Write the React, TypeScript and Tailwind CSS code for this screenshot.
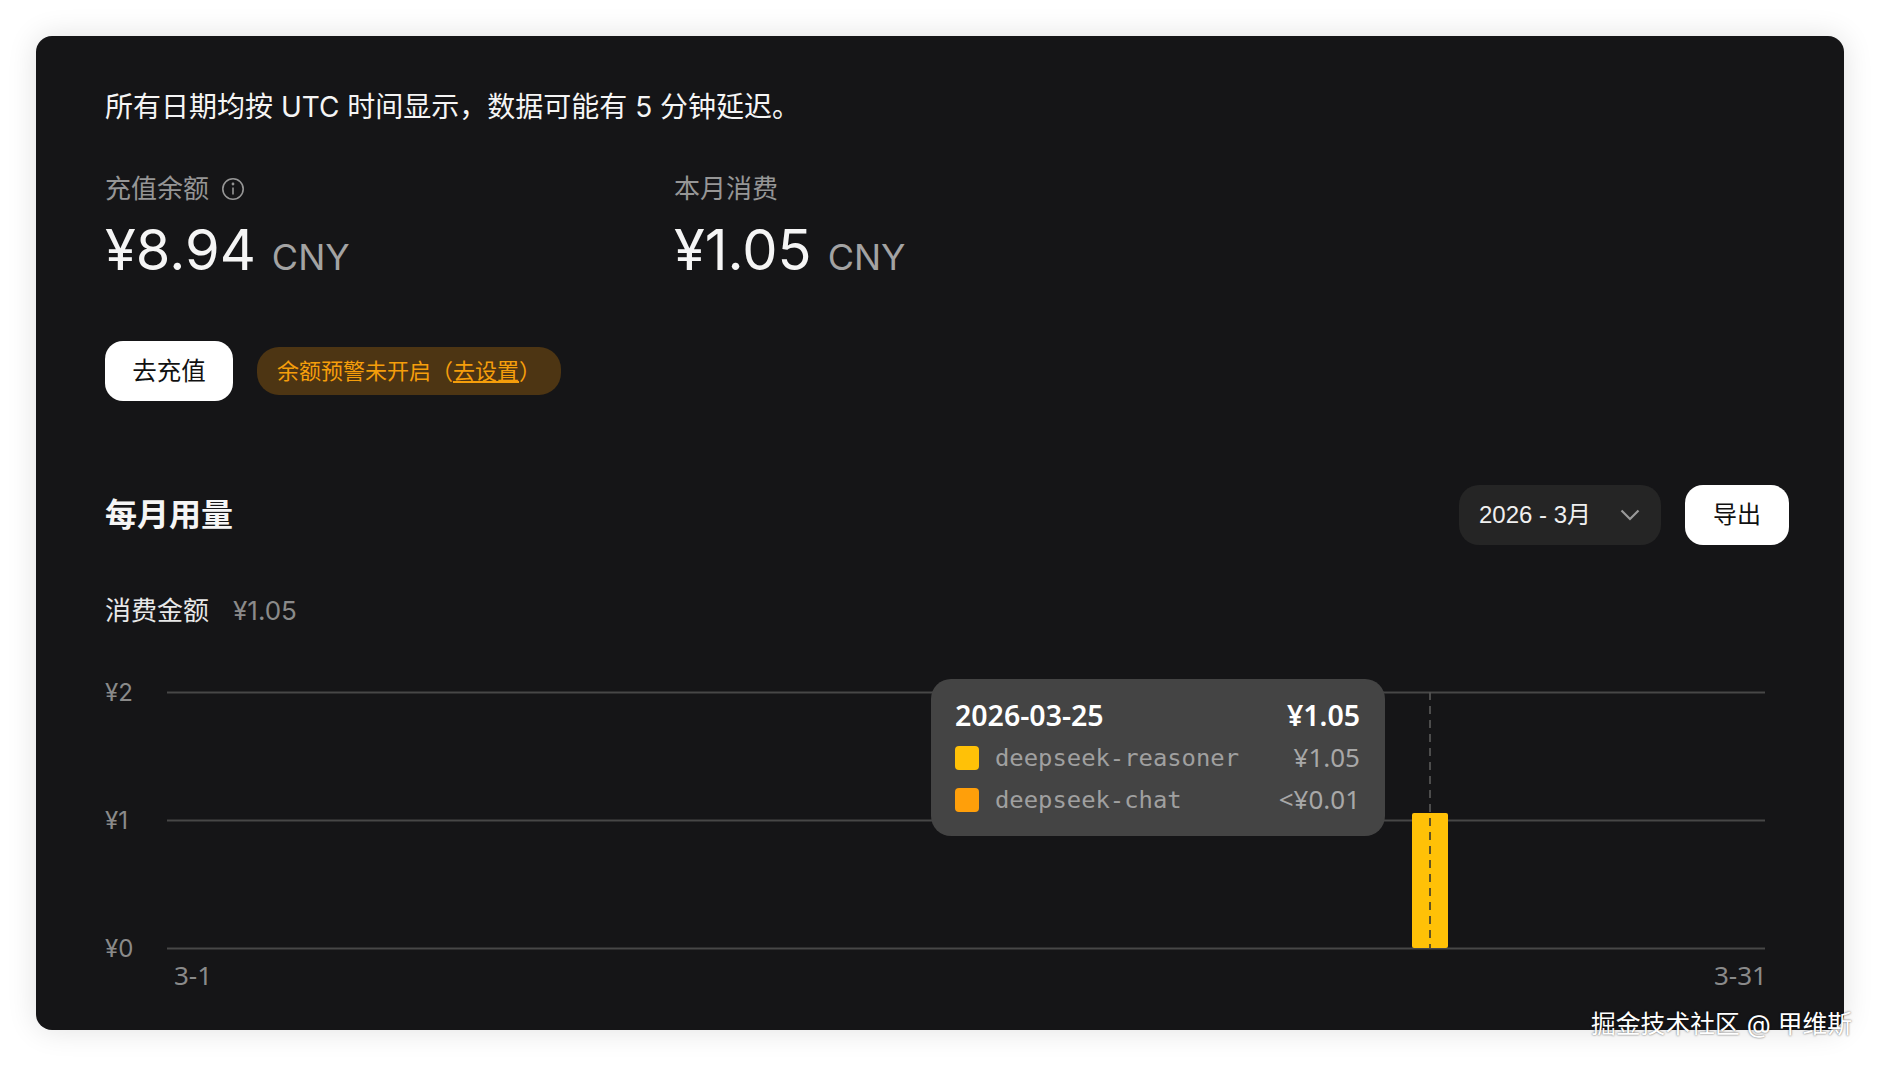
import React from "react";

const sans = "font-['Inter','Noto_Sans_CJK_SC',sans-serif]";

function Stat({ label, value, info, width }: { label: string; value: string; info?: boolean; width: string }) {
  return (
    <div className={`flex flex-col ${width}`}>
      <div className="flex items-center gap-[12px] h-[36px] text-[26px] leading-[36px] text-[#969696]">
        <span>{label}</span>
        {info && (
          <svg width="24" height="24" viewBox="0 0 24 24" fill="none" stroke="#969696" strokeWidth="1.6">
            <circle cx="12" cy="12" r="10.2" />
            <path d="M12 10.5v7" />
            <circle cx="12" cy="7" r="0.6" fill="#969696" />
          </svg>
        )}
      </div>
      <div className="flex items-baseline mt-[8px] h-[70px]">
        <span className="text-[56px] leading-[70px] text-[#f5f5f5]">{value}</span>
        <span className="ml-[16px] text-[36px] leading-[70px] text-[#a3a3a3]">CNY</span>
      </div>
    </div>
  );
}

function TooltipRow({ color, name, value }: { color: string; name: string; value: string }) {
  return (
    <div className="flex items-center h-[42px]">
      <span className="w-[24px] h-[24px] rounded-[4px] mr-[16px]" style={{ background: color }} />
      <span className="flex-1 pt-[2px] font-['DejaVu_Sans_Mono',monospace] text-[23.85px] text-[#a0a0a0]">{name}</span>
      <span className="-mt-[2px] font-['Noto_Sans',sans-serif] text-[26px] text-[#a8a8a8]">{value}</span>
    </div>
  );
}

function Chart() {
  return (
    <div className="relative mt-[49px] h-[310px] w-[1660px] font-['Noto_Sans',sans-serif] text-[26px] text-[#8a8a8a]">
      <svg className="absolute inset-0" width="1660" height="310" viewBox="0 0 1660 310" fill="none">
        <path d="M62 14.5H1660M62 142.5H1660M62 270.5H1660" stroke="#474747" strokeWidth="2" />
        <rect x="1307" y="135" width="36" height="135" rx="2" fill="#ffc107" />
        <path d="M1325 14V270" stroke="#2e2e2e" strokeWidth="1.5" strokeDasharray="8 6" />
        <path d="M1325 14V135" stroke="#5a5a5a" strokeWidth="1.5" strokeDasharray="8 6" />
      </svg>
      <div className="flex flex-col gap-[96px] relative -top-[1px] font-['Inter',sans-serif] text-[24px] leading-[32px]">
        <span>¥2</span>
        <span>¥1</span>
        <span>¥0</span>
      </div>
      <div className="relative flex justify-between -mt-[8px] -mr-[2px] pl-[69px] leading-[34px]">
        <span>3-1</span>
        <span>3-31</span>
      </div>
      <div className="absolute left-[826px] top-[1px] w-[454px] h-[157px] rounded-[20px] bg-[#444444] pl-[24px] pr-[25px] pt-[14px]">
        <div className="flex justify-between h-[44px] items-center text-[28.5px] font-semibold text-[#ffffff]">
          <span>2026-03-25</span>
          <span>¥1.05</span>
        </div>
        <TooltipRow color="#ffc107" name="deepseek-reasoner" value="¥1.05" />
        <TooltipRow color="#ff9f0a" name="deepseek-chat" value="<¥0.01" />
      </div>
    </div>
  );
}

export default function App() {
  return (
    <div className={`relative w-[1880px] h-[1066px] overflow-hidden bg-white pl-[36px] pt-[36px] ${sans}`}>
      <div className="w-[1808px] h-[994px] rounded-[16px] bg-[#151517] pl-[69px] pr-[55px] pt-[50px] shadow-[0_0_30px_rgba(0,0,0,0.12)]">
        <div className="text-[28px] leading-[42px] text-[#f5f5f5]">所有日期均按 UTC 时间显示，数据可能有 5 分钟延迟。</div>
        <div className="flex mt-[43px]">
          <Stat label="充值余额" value="¥8.94" info width="w-[569px]" />
          <Stat label="本月消费" value="¥1.05" width="w-[400px]" />
        </div>
        <div className="flex items-center gap-[24px] mt-[56px]">
          <button className="w-[128px] h-[60px] rounded-[18px] bg-white text-[24.5px] text-[#111]">去充值</button>
          <div className="h-[48px] w-[304px] rounded-[22px] bg-[#4d3513] pl-[20px] flex items-center text-[22px] text-[#f59e0b]">
            <span>余额预警未开启（</span>
            <span className="underline">去设置</span>
            <span>）</span>
          </div>
        </div>
        <div className="flex items-center justify-between mt-[84px] h-[60px]">
          <div className="text-[32px] font-bold text-[#f5f5f5]">每月用量</div>
          <div className="flex items-center gap-[24px]">
            <div className="flex items-center justify-between w-[202px] h-[60px] rounded-[20px] bg-[#252525] pl-[20px] pr-[21px] font-['Liberation_Sans','Noto_Sans_CJK_SC',sans-serif] text-[24px] text-[#f0f0f0]">
              <span>2026 - 3月</span>
              <svg width="20" height="12" viewBox="0 0 20 12" fill="none" stroke="#999999" strokeWidth="2.2">
                <path d="M1.5 1.5L10 10L18.5 1.5" />
              </svg>
            </div>
            <button className="w-[104px] h-[60px] rounded-[18px] bg-white text-[24px] text-[#111]">导出</button>
          </div>
        </div>
        <div className="flex items-center gap-[24px] mt-[46px] h-[38px]">
          <span className="text-[26px] text-[#e8e8e8]">消费金额</span>
          <span className="text-[26px] text-[#8a8a8a]">¥1.05</span>
        </div>
        <Chart />
      </div>
      <div className="absolute left-[1591px] top-[1006px] text-[24.8px] leading-[36px] text-[#ffffff] [text-shadow:0_0_2px_rgba(0,0,0,0.7)]">掘金技术社区 @ 甲维斯</div>
    </div>
  );
}
